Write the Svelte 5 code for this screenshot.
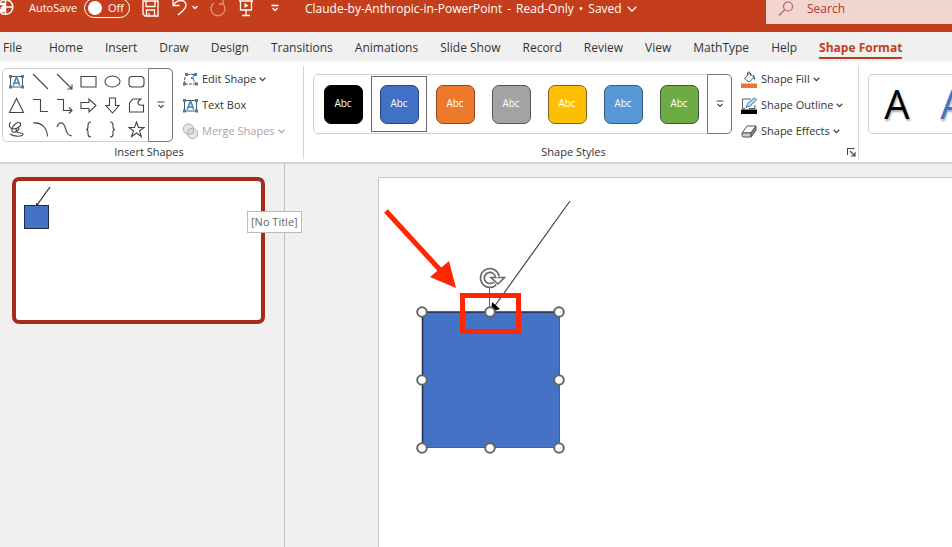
<script>
  const tabs = ['Home', 'Insert', 'Draw', 'Design', 'Transitions', 'Animations', 'Slide Show', 'Record', 'Review', 'View', 'MathType', 'Help'];
  const styles = [
    { name: 'Black', fill: '#000000', edge: '#000000' },
    { name: 'Blue', fill: '#4170c4', edge: '#2e4673', selected: true },
    { name: 'Orange', fill: '#ed7a2b', edge: '#8a4a25' },
    { name: 'Gray', fill: '#a3a3a3', edge: '#555555' },
    { name: 'Gold', fill: '#febf00', edge: '#7a632a' },
    { name: 'Light blue', fill: '#5799d6', edge: '#3c5a78' },
    { name: 'Green', fill: '#6dab45', edge: '#40563a' }
  ];
  const shapes = [
    { name: 'Text box', text: true },
    { name: 'Line', d: 'M1 1L16 16' },
    { name: 'Arrow', d: 'M1 1L16 16M16 11.5V16H11.5' },
    { name: 'Rectangle', d: 'M1 3.5H16V14H1Z' },
    { name: 'Oval', d: 'M1 8.5a7.5 5.5 0 1 0 15 0a7.5 5.5 0 1 0 -15 0Z' },
    { name: 'Rounded rectangle', d: 'M4 3.5H13Q16 3.5 16 6.5V11Q16 14 13 14H4Q1 14 1 11V6.5Q1 3.5 4 3.5Z' },
    { name: 'Triangle', d: 'M8.5 1.5L15.5 15.5H1.5Z' },
    { name: 'Elbow connector', d: 'M1 2.5H8.5V14.5H16' },
    { name: 'Elbow arrow connector', d: 'M1 2.5H7.5V13.5H15.5M13 10.5L16 13.5L13 16.5' },
    { name: 'Right arrow', d: 'M1 5.5H9V2L16 8.5L9 15V11.5H1Z' },
    { name: 'Down arrow', d: 'M5.5 1H11.5V8.5H15L8.5 16L2 8.5H5.5Z' },
    { name: 'Freeform', d: 'M5 2H13.5Q9.5 3.5 10 6.5Q11 9 15.500 8V15H1.500V6Z' },
    { name: 'Scribble', d: 'M2.5 1C0 5 2 8 6 8C11 7 14 4 12 2C9 0 3 6 4 10C5 13 11 10 11 7C9 6 7 9 9 11C11 13 15 11 15 13C15 16 6 16 2 13' },
    { name: 'Arc', d: 'M1 2C9 1 15 6 15.5 15.5' },
    { name: 'Curve', d: 'M1 6C3 1 7 0 9 6C11 13 12 14 16 15' },
    { name: 'Left brace', d: 'M11 1Q8 1 8 4V6Q8 8.5 6 8.5Q8 8.5 8 11V13Q8 16 11 16' },
    { name: 'Right brace', d: 'M6 1Q9 1 9 4V6Q9 8.5 11 8.5Q9 8.5 9 11V13Q9 16 6 16' },
    { name: 'Star', d: 'M8.5 1L10.5 6.5H16L11.6 9.8L13.3 15.5L8.5 12L3.7 15.5L5.4 9.8L1 6.5H6.5Z' }
  ];
  const handles = [[42, 133], [110, 133], [179, 133], [42, 201], [179, 201], [42, 269], [110, 269], [179, 269]];
</script>

{#snippet chevron()}
  <svg class="chevron" width="7" height="5" viewBox="0 0 7 5"><path d="M.7 .8L3.5 3.6L6.3 .8" /></svg>
{/snippet}

{#snippet more()}
  <svg width="8" height="8" viewBox="0 0 8 8" class="ink"><path d="M.5 1H7.5M1.5 4L4 6.5L6.5 4" /></svg>
{/snippet}

{#snippet textIcon()}
  <svg width="17" height="17" viewBox="0 0 17 17">
    <path d="M2.5 3.5H14.5V14H2.5Z" fill="#fff" stroke="#555" />
    <path d="M5.3 12.5L8 5H9L11.7 12.5M6.4 10H10.6" fill="none" stroke="#2f86cc" stroke-width="1.6" />
    <path d="M1 2h3v3H1zM13 2h3v3h-3zM1 12.5h3v3H1zM13 12.5h3v3h-3z" fill="#3384c4" />
  </svg>
{/snippet}

<div class="app">
  <header class="titlebar">
    <div class="quick">
      <svg class="logo" width="16" height="18" viewBox="0 0 16 18" fill="none" stroke="#fff" stroke-width="1.5">
        <circle cx="5.5" cy="8" r="7.3" /><path d="M5.5 1V15M5.5 8H13" /><rect x="-3" y="4.5" width="8" height="8" fill="#fff" />
        <path d="M0 10V7H2.5" stroke="#c43e1c" />
      </svg>
      <label class="autosave">AutoSave
        <span class="switch"><input type="checkbox" role="switch" /><span class="knob"></span>Off</span>
      </label>
      <button aria-label="Save" class="save"><svg width="17" height="17" viewBox="0 0 17 17"><path d="M1 1H16V16H3L1 14ZM4 1V6.5H13V1M4.5 16V10H12.5V16M7 13V16" /></svg></button>
      <button aria-label="Undo" class="undo"><svg width="28" height="18" viewBox="0 0 28 18"><path d="M2 0V6.5H8.5M2 6.5C6 0 14 0 15 5.5C15.5 10 11 12 7 16" /><path d="M21.5 7L24 9.5L26.5 7" /></svg></button>
      <button aria-label="Redo" class="redo"><svg width="18" height="18" viewBox="0 0 18 18"><path d="M14 1V5H10M13 4A7 7 0 1 1 5 4" /></svg></button>
      <button aria-label="Start slide show" class="play"><svg width="16" height="18" viewBox="0 0 16 18"><path d="M1 2H15M2.5 2V11H13.5V2M8 11V16.5M4 16.5H12" /><path class="solid" d="M6.5 4L10.5 6.5L6.5 9Z" /></svg></button>
      <button aria-label="Customize toolbar"><svg width="8" height="8" viewBox="0 0 8 8"><path d="M.5 1.5H7.5M1.5 4L4 6.5L6.5 4" /></svg></button>
    </div>
    <button class="document">
      <span>Claude-by-Anthropic-in-PowerPoint</span><span>-</span><span>Read-Only</span><span>•</span><span>Saved</span>
      <svg width="10" height="6" viewBox="0 0 10 6"><path d="M.7 .7L5 5L9.3 .7" /></svg>
    </button>
    <label class="search">
      <svg width="16" height="16" viewBox="0 0 16 16" fill="none" stroke="#b8605c" stroke-width="1.2"><circle cx="10" cy="5.5" r="4.5" /><path d="M6.8 8.7L1 14.5" /></svg>
      <input type="search" placeholder="Search" aria-label="Search" />
    </label>
  </header>

  <nav class="tabs" aria-label="Ribbon tabs">
    <button class="file">File</button>
    {#each tabs as tab}<button>{tab}</button>{/each}
    <button class="active">Shape Format</button>
  </nav>

  <div class="ribbon">
    <section class="group insert">
      <div class="tools">
        <div class="gallery shapes">
          <div class="shape-grid">
            {#each shapes as shape}
              <button aria-label={shape.name}>
                {#if shape.text}{@render textIcon()}{:else}<svg class="ink" width="17" height="17" viewBox="0 0 17 17"><path d={shape.d} /></svg>{/if}
              </button>
            {/each}
          </div>
          <button class="more" aria-label="More shapes">{@render more()}</button>
        </div>
        <div class="commands">
          <button>
            <svg width="17" height="17" viewBox="0 0 17 17"><path d="M5 3.5H13Q9 7 14 12.5M3 6L2 13H14" fill="none" stroke="#555" stroke-dasharray="3 1" /><path d="M3 2h3v3H3zM12 2h3v3h-3zM1 11.5h3v3H1zM13 11.5h3v3h-3zM9 6h2v2H9z" fill="#3384c4" /></svg>
            Edit Shape {@render chevron()}
          </button>
          <button>{@render textIcon()}Text Box</button>
          <button class="muted" disabled>
            <svg width="17" height="17" viewBox="0 0 17 17" fill="#c4c4c4" stroke="#555"><circle cx="6.5" cy="6" r="5.2" /><circle cx="10.5" cy="10.5" r="5.2" /><path d="M5.4 11Q4.7 6 10 5.3Q13 8 11 10Q9 12 5.4 11Z" fill="#aaa" /></svg>
            Merge Shapes {@render chevron()}
          </button>
        </div>
      </div>
      <footer><h2>Insert Shapes</h2></footer>
    </section>

    <section class="group styles">
      <div class="tools">
        <div class="gallery">
          <div class="swatches">
            {#each styles as style}
              <button class:selected={style.selected} aria-label={style.name + ' style'}>
                <span class="swatch" style="background: {style.fill}; border-color: {style.edge}">Abc</span>
              </button>
            {/each}
          </div>
          <button class="more" aria-label="More styles">{@render more()}</button>
        </div>
        <div class="commands">
          <button>
            <svg width="17" height="17" viewBox="0 0 17 17"><path d="M8.5 2L13 6.5L8 11L3.5 7.5ZM6.5 4V1.5Q8 0 9.5 2V5" fill="#fff" stroke="#555" /><path d="M12 4Q15 5 14 10Q13 7 12 7Z" fill="#2879b8" /><path d="M0 12.5H16V17H0Z" fill="#ed742b" /></svg>
            Shape Fill {@render chevron()}
          </button>
          <button>
            <svg width="17" height="17" viewBox="0 0 17 17"><path d="M10 2H1.5V11.5H4M8 11.5H14V8" fill="none" stroke="#555" /><path d="M5 10.5L6.5 6.5L13.5 .8L15.5 3L9 9Z" fill="#b8dcf6" stroke="#2882c8" /><path d="M0 12.5H16V17H0Z" fill="#000" /></svg>
            Shape Outline {@render chevron()}
          </button>
          <button>
            <svg width="17" height="17" viewBox="0 0 17 17" stroke="#555" stroke-linejoin="round"><path d="M6 3H15L10 10H1Z" fill="#fff" /><path d="M1 10H10V14H3Q1 14 1 12Z" fill="#d0d0d0" /><path d="M10 10L15 3V7.5L10 14Z" fill="#888" /></svg>
            Shape Effects {@render chevron()}
          </button>
        </div>
      </div>
      <footer>
        <h2>Shape Styles</h2>
        <button aria-label="Format shape"><svg class="ink" width="9" height="9" viewBox="0 0 9 9"><path d="M.5 7V.5H7.5M3 3L8 8M8 4V8H4" /></svg></button>
      </footer>
    </section>

    <section class="group wordart">
      <div class="gallery letters">
        <button class="black">A</button>
        <button class="blue">A</button>
      </div>
    </section>
  </div>

  <main class="workspace">
    <aside>
      <button class="thumbnail" aria-label="Slide 1">
        <svg width="40" height="56" viewBox="0 0 40 56"><path d="M34 6L21 24" stroke="#222" stroke-width="1.2" /><path d="M20 26L20 22L23 24Z" fill="#111" /><rect x="8.5" y="24.5" width="24" height="23" fill="#4472c4" stroke="#1d2c49" /></svg>
      </button>
      <span class="tooltip" role="tooltip">[No Title]</span>
    </aside>
    <div class="canvas">
      <div class="slide">
        <svg class="drawing" width="210" height="290" viewBox="0 0 210 290">
          <rect x="42.5" y="133.5" width="137" height="135" fill="#4472c4" stroke="#555f70" />
          <path d="M42.5 269V133H179" fill="none" stroke="#1f304f" stroke-width="1.5" />
          <path d="M190 22L114 128" stroke="#444" stroke-width="1.2" />
          <path d="M111 133L112 123L120 130Z" fill="#000" />
          <path d="M109.5 108V133" stroke="#666" />
          <path d="M117.3 97.500A7.500 7.500 0 1 0 115 104.500" fill="none" stroke="#666" stroke-width="5.500" />
          <path d="M111 98.500H124.500L118 105Z" fill="#fff" stroke="#666" stroke-width="1.600" />
          <path d="M117.300 98.500A7.500 7.500 0 1 0 114.500 104.800" fill="none" stroke="#fff" stroke-width="2.200" />
          <rect x="82.5" y="116.500" width="56" height="36" fill="none" stroke="#ff2600" stroke-width="5" />
          {#each handles as [x, y]}<circle cx={x} cy={y} r="4.8" fill="#fff" stroke="#666" stroke-width="2" />{/each}
          <path d="M6 32L61 92" stroke="#ff2600" stroke-width="5" />
          <path d="M76 109L69 82L50 98Z" fill="#ff2600" />
        </svg>
      </div>
    </div>
  </main>
</div>

<style>
  :global(body) { margin: 0; }
  .app { display: flex; flex-direction: column; height: 100vh; overflow: hidden; background: #f0f0f0; color: #333; font: 12px/16px "Open Sans", "Noto Sans", sans-serif; }
  button { display: flex; align-items: center; justify-content: center; margin: 0; padding: 0; border: 0; background: none; color: inherit; font: inherit; white-space: nowrap; }
  svg { display: block; flex: none; }
  .ink, .chevron { fill: none; stroke: #444; stroke-width: 1.1; }
  .chevron { stroke-width: 1.3; }

  .titlebar { display: flex; align-items: flex-start; height: 32px; flex: none; background: #c43e1c; color: #fff; font-size: 11px; overflow: hidden; }
  .titlebar button svg { fill: none; stroke: #fff; stroke-width: 1.3; }
  .titlebar .solid { fill: #fff; stroke: none; }
  .quick { display: flex; align-items: center; height: 16px; width: 305px; flex: none; }
  .autosave { display: flex; align-items: center; gap: 7px; margin: 0 12px 0 13px; }
  .switch { display: flex; align-items: center; gap: 6px; box-sizing: border-box; width: 46px; height: 20px; padding-left: 3px; border: 1px solid #fff; border-radius: 10px; }
  .switch input { position: absolute; width: 14px; height: 14px; margin: 0; opacity: 0; }
  .knob { width: 14px; height: 14px; border-radius: 50%; background: #fff; }
  .undo { margin-left: 12px; }
  .redo { margin-left: 10px; opacity: 0.45; }
  .play { margin: 0 17px 0 11px; }
  .document { gap: 5px; height: 18px; font-size: 12px; }
  .search { display: flex; align-items: center; gap: 13px; box-sizing: border-box; width: 186px; height: 24px; margin-left: auto; padding: 0 0 6px 12px; background: #f0d6cf; }
  .search input { width: 120px; padding: 0; border: 0; outline: 0; background: none; color: #b7342c; font: 12px/16px "Open Sans", "Noto Sans", sans-serif; }
  .search input::placeholder { color: #b7342c; opacity: 1; }

  .tabs { display: flex; gap: 22px; height: 30px; flex: none; padding: 2px 0 0 3px; border-bottom: 1px solid #f8f8f8; box-sizing: border-box; }
  .file { margin-right: 5px; }
  .tabs .active { box-sizing: border-box; height: 25px; padding-top: 4px; border-bottom: 2px solid #c43e1c; color: #c43e1c; font-weight: 700; }

  .ribbon { display: flex; height: 100px; flex: none; border-bottom: 2px solid #d4d4d4; background: #fff; font-size: 11px; }
  .group { display: flex; flex-direction: column; justify-content: space-between; box-sizing: border-box; margin: 4px 0 3px; border-right: 1px solid #d4d4d4; flex: none; }
  .insert { width: 304px; padding: 2px 7px 0 2px; }
  .styles { width: 555px; padding: 2px 0 0 9px; }
  .wordart { flex: 1; min-width: 0; padding: 8px 0 0 9px; border: 0; justify-content: flex-start; }
  .tools { display: flex; }
  .gallery { display: flex; box-sizing: border-box; border: 1px solid #cfcfcf; border-radius: 5px; }
  .shapes { height: 74px; }
  .shape-grid { display: grid; grid-template-columns: repeat(6, 24px); grid-auto-rows: 24px; padding: 0 1px; }
  .more { width: 25px; margin: -1px; border: 1px solid #777; border-radius: 0 5px 5px 0; }
  .commands { display: flex; flex-direction: column; align-items: flex-start; margin: -2px 0 0 9px; }
  .commands button { gap: 3px; height: 26px; }
  .muted { opacity: 0.45; }
  .styles .gallery { height: 60px; margin-top: 6px; }
  .swatches { display: flex; padding: 1px; }
  .swatches button { box-sizing: border-box; width: 56px; height: 56px; border: 1px solid transparent; }
  .swatches .selected { border-color: #666; }
  .swatch { box-sizing: border-box; width: 39px; height: 39px; border: 1px solid; border-radius: 7px; color: #fff; font-size: 10px; line-height: 34px; font-weight: 500; }
  footer { display: flex; align-items: center; height: 14px; }
  h2 { flex: 1; margin: 0; font: inherit; text-align: center; }
  footer button { width: 24px; justify-content: flex-end; padding-right: 2px; box-sizing: border-box; }
  .letters { height: 60px; border-radius: 5px 0 0 5px; border-right: 0; overflow: hidden; }
  .letters button { flex: none; width: 56px; font: 500 40px/56px "Open Sans", "Noto Sans", sans-serif; text-shadow: 1px 2px 2px #aaa; }
  .black { color: #000; }
  .blue { color: #4472c4; }

  .workspace { display: flex; flex: 1; min-height: 0; }
  aside { position: relative; box-sizing: border-box; width: 285px; flex: none; padding: 13px 19px 0 12px; border-right: 1px solid #bfbfc4; }
  .thumbnail { align-items: flex-start; justify-content: flex-start; box-sizing: border-box; width: 100%; height: 147px; border: 4px solid #a52b1a; border-radius: 7px; background: #fff; }
  .tooltip { position: absolute; top: 47px; left: 247px; z-index: 1; padding: 2px 3px; border: 1px solid #bbb; background: #fff; color: #666; font-size: 11px; white-space: nowrap; }
  .canvas { display: flex; flex: 1; min-width: 0; padding: 13px 0 0 93px; }
  .slide { flex: 1; min-width: 0; padding: 1px 0 0 1px; border: 1px solid #c6c6c6; border-width: 1px 0 0 1px; background: #fff; }
</style>
